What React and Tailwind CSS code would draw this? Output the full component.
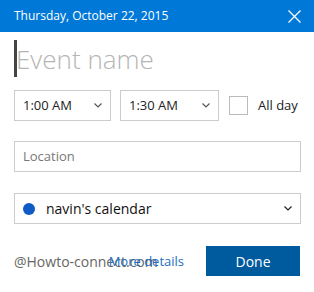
export default function App() {
  const font = { fontFamily: '"Open Sans", "Noto Sans", sans-serif' };

  return (
    <div className="w-[314px] h-[292px] bg-white overflow-hidden" style={font}>
      {/* Header */}
      <div className="h-[32px] bg-[#0078d7] flex items-center justify-between pl-[14px] pr-[13px]">
        <span className="text-white text-[12px] leading-none">Thursday, October 22, 2015</span>
        <svg width="13" height="13" viewBox="0 0 13 13" className="text-white">
          <path d="M0.5 0.5 L12.5 12.5 M12.5 0.5 L0.5 12.5" stroke="currentColor" strokeWidth="1.3" fill="none" />
        </svg>
      </div>

      <div className="px-[14px]">
        {/* Event name */}
        <div className="flex items-center mt-[8px] h-[37px]">
          <div className="w-[3px] h-[37px] bg-[#444]" />
          <span className="text-[26px] font-light text-[#b5b5b5] leading-none -ml-[1px]">Event name</span>
        </div>

        {/* Time row */}
        <div className="flex items-center mt-[13px]">
          <div className="w-[97px] h-[31px] border border-[#cccccc] flex items-center justify-between pl-[8px] pr-[8px]">
            <span className="text-[13px] text-[#222]">1:00 AM</span>
            <Chevron />
          </div>
          <div className="w-[99px] h-[31px] border border-[#cccccc] flex items-center justify-between pl-[8px] pr-[8px] ml-[9px]">
            <span className="text-[13px] text-[#222]">1:30 AM</span>
            <Chevron />
          </div>
          <div className="w-[19px] h-[19px] border border-[#bbbbbb] ml-[10px]" />
          <span className="text-[13px] text-[#222] ml-[10px]">All day</span>
        </div>

        {/* Location */}
        <div className="mt-[20px] h-[31px] w-[287px] border border-[#cccccc] flex items-center pl-[8px]">
          <span className="text-[13px] text-[#777]">Location</span>
        </div>

        {/* Calendar */}
        <div className="mt-[21px] h-[31px] w-[287px] border border-[#cccccc] flex items-center pl-[8px] pr-[8px]">
          <div className="w-[12px] h-[12px] rounded-full bg-[#0f5bc6]" />
          <span className="text-[14px] text-[#111] ml-[11px] flex-1">navin's calendar</span>
          <Chevron dark />
        </div>

        {/* Footer */}
        <div className="relative mt-[22px] flex items-center justify-end h-[30px]">
          <span className="absolute left-0 top-[9px] text-[14px] text-[#666] leading-none">@Howto-connect.com</span>
          <span className="relative text-[13px] text-[#1e6fc2] mr-[22px] mt-[2px]">More details</span>
          <div className="w-[94px] h-[30px] bg-[#005a9e] flex items-center justify-center">
            <span className="text-white text-[14px]">Done</span>
          </div>
        </div>
      </div>
    </div>
  );
}

function Chevron({ dark }) {
  return (
    <svg width="8" height="5" viewBox="0 0 8 5">
      <path d="M0.5 0.5 L4 4 L7.5 0.5" stroke={dark ? "#222" : "#555"} strokeWidth="1.2" fill="none" />
    </svg>
  );
}
